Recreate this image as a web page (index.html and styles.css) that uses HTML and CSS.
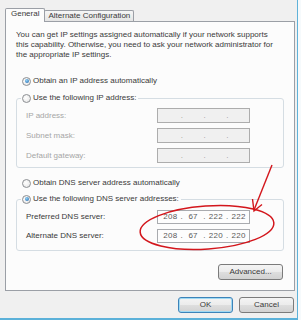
FILE: index.html
```html
<!DOCTYPE html>
<html>
<head>
<meta charset="utf-8">
<title>Internet Protocol Properties</title>
<link rel="stylesheet" href="styles.css">
</head>
<body>
<div class="window">
  <div class="tabs">
    <div class="tab active">General</div>
    <div class="tab">Alternate Configuration</div>
  </div>
  <div class="panel">
    <p class="intro">You can get IP settings assigned automatically if your network supports<br>this capability. Otherwise, you need to ask your network administrator for<br>the appropriate IP settings.</p>

    <div class="opt opt-first"><span class="radio on"></span><span>Obtain an IP address automatically</span></div>

    <fieldset class="group group-ip">
      <legend><span class="radio"></span><span>Use the following IP address:</span></legend>
      <div class="field disabled"><span>IP address:</span><span class="ip"><i></i><b>.</b><i></i><b>.</b><i></i><b>.</b><i></i></span></div>
      <div class="field disabled"><span>Subnet mask:</span><span class="ip"><i></i><b>.</b><i></i><b>.</b><i></i><b>.</b><i></i></span></div>
      <div class="field disabled"><span>Default gateway:</span><span class="ip"><i></i><b>.</b><i></i><b>.</b><i></i><b>.</b><i></i></span></div>
    </fieldset>

    <div class="opt opt-dns"><span class="radio"></span><span>Obtain DNS server address automatically</span></div>

    <fieldset class="group group-dns">
      <legend><span class="radio on"></span><span>Use the following DNS server addresses:</span></legend>
      <div class="field"><span>Preferred DNS server:</span><span class="ip live"><i>208</i><b>.</b><i>67</i><b>.</b><i>222</i><b>.</b><i>222</i></span></div>
      <div class="field"><span>Alternate DNS server:</span><span class="ip live"><i>208</i><b>.</b><i>67</i><b>.</b><i>220</i><b>.</b><i>220</i></span></div>
    </fieldset>

    <div class="adv-row"><button class="btn btn-adv">Advanced...</button></div>
  </div>
  <div class="footer">
    <button class="btn btn-default">OK</button>
    <button class="btn">Cancel</button>
  </div>
</div>
<svg class="annot" width="301" height="320" viewBox="0 0 301 320">
  <ellipse cx="207" cy="227.5" rx="67" ry="21.5" transform="rotate(-4 207 227.5)" fill="none" stroke="#d3161c" stroke-width="1.5"/>
  <path d="M272 165 L254 210" fill="none" stroke="#d3161c" stroke-width="1.4"/>
  <path d="M252.5 199 L254 211 L262 204.5" fill="none" stroke="#d3161c" stroke-width="1.4"/>
</svg>
</body>
</html>
```

FILE: styles.css
```css
html, body {
  margin: 0;
  padding: 0;
}

body {
  width: 301px;
  height: 320px;
  position: relative;
  overflow: hidden;
  background: #f6fafc;
  font-family: "Liberation Sans", Arial, sans-serif;
  font-size: 8px;
  line-height: 10px;
  color: #3a3a3a;
}

.window {
  box-sizing: border-box;
  width: 298px;
  height: 320px;
  background: #f0f0f0;
  border-right: 1px solid #5fb2d9;
  border-bottom: 2px solid #5bb1d9;
  padding: 8px 2px 0 5px;
}

/* Tabs */
.tabs {
  display: flex;
  align-items: flex-end;
  height: 13px;
  position: relative;
  z-index: 1;
}

.tab {
  box-sizing: border-box;
  height: 11px;
  line-height: 9px;
  padding: 0 3px;
  margin-left: -1px;
  border: 1px solid #9b9fa6;
  border-bottom: 0;
  border-radius: 2px 2px 0 0;
  background: linear-gradient(#f6f6f6, #e4e4e4);
  white-space: nowrap;
}

.tab.active {
  position: relative;
  z-index: 2;
  height: 14px;
  line-height: 10px;
  margin-left: 0;
  margin-bottom: -1px;
  padding: 0 5px;
  background: #fcfcfc;
}

/* Panel */
.panel {
  box-sizing: border-box;
  width: 290px;
  height: 270px;
  border: 1px solid #9b9fa6;
  background: #fcfcfc;
  padding: 8px 10px 0;
}

.intro {
  margin: 0;
  white-space: nowrap;
}

.opt {
  display: flex;
  align-items: center;
  gap: 2px;
  height: 10px;
  padding-left: 6px;
  white-space: nowrap;
}

.opt-first {
  margin-top: 16px;
}

.opt-dns {
  margin-top: 10px;
}

.radio {
  box-sizing: border-box;
  position: relative;
  flex: none;
  width: 9px;
  height: 9px;
  border-radius: 50%;
  border: 1px solid #8c8f93;
  background: radial-gradient(circle at 40% 40%, #ffffff, #e2e2e2);
}

.radio.on::after {
  content: "";
  position: absolute;
  left: 1.5px;
  top: 1.5px;
  width: 4px;
  height: 4px;
  border-radius: 50%;
  background: radial-gradient(circle at 40% 35%, #8fd2f6, #1c5fa8);
}

/* Group boxes */
.group {
  margin: 7px 0 0;
  min-width: 0;
  border: 1px solid #d5dde3;
  border-radius: 3px;
  padding: 5px 33px 4px 9px;
}

.group legend {
  display: flex;
  align-items: center;
  gap: 2px;
  height: 10px;
  line-height: 10px;
  padding: 0 2px 0 1px;
  margin-left: -5px;
  white-space: nowrap;
}

.group-dns {
  margin-top: 6px;
  padding: 6px 33px 7px 9px;
}

.field {
  display: flex;
  align-items: center;
  justify-content: space-between;
  height: 15px;
}

.field + .field {
  margin-top: 5px;
}

.group-dns .field {
  height: 14px;
}

.field.disabled {
  color: #a6a6a6;
}

.ip {
  box-sizing: border-box;
  width: 93px;
  height: 15px;
  padding: 0 1px 0 3px;
  border: 1px solid #adadad;
  background: #f0f0f0;
  display: grid;
  grid-template-columns: 1fr 4px 1fr 4px 1fr 4px 1fr;
  align-items: center;
  text-align: center;
  color: #9a9a9a;
}

.ip i {
  font-style: normal;
}

.ip b {
  font-weight: normal;
}

.ip.live {
  height: 14px;
  border-color: #a9abaf;
  background: #fdfdfd;
  color: #5a5a5a;
  letter-spacing: 0.3px;
}

/* Buttons */
.btn {
  box-sizing: border-box;
  height: 16px;
  padding: 0;
  border: 1px solid #7b7b7b;
  border-radius: 3px;
  background: linear-gradient(#f4f4f4 0%, #ececec 48%, #dedede 52%, #d2d2d2 100%);
  font-family: inherit;
  font-size: 8px;
  line-height: 14px;
  color: #3a3a3a;
  text-align: center;
}

.adv-row {
  display: flex;
  justify-content: flex-end;
  margin-top: 13px;
  padding-right: 1px;
}

.btn-adv {
  width: 65px;
}

.footer {
  display: flex;
  justify-content: flex-end;
  gap: 6px;
  margin-top: 6px;
  padding-right: 1px;
}

.footer .btn {
  width: 55px;
}

.btn-default {
  border-color: #3c83b9;
  box-shadow: inset 0 0 0 1px #9fd9f3;
}

/* Annotation overlay */
.annot {
  position: absolute;
  left: 0;
  top: 0;
  pointer-events: none;
}
```
